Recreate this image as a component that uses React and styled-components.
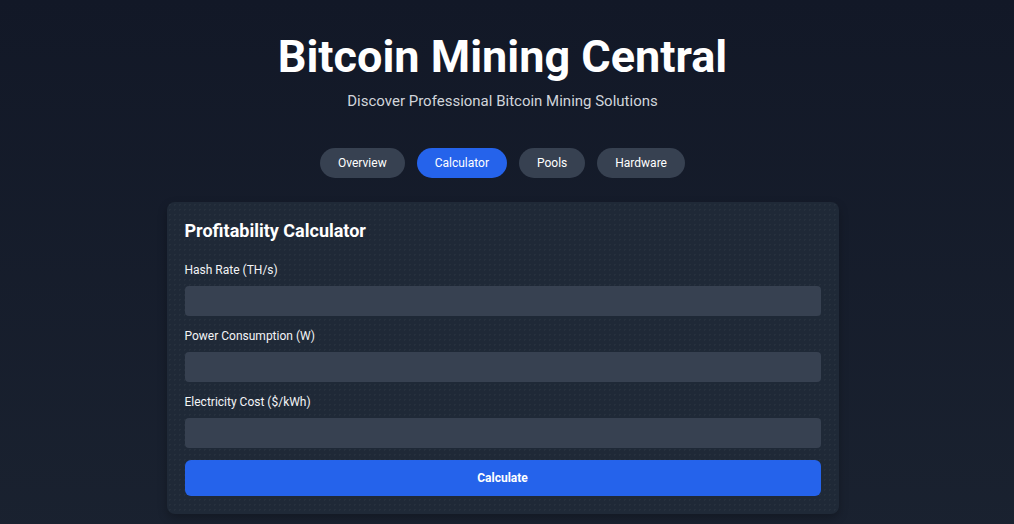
import styled, {createGlobalStyle} from "styled-components";

const GlobalStyle = createGlobalStyle`
    html, body {
        margin: 0;
        padding: 0;
    }
    body {
        font-family: Roboto, "Liberation Sans", sans-serif;
        color: #ffffff;
        background: #111827;
    }
    * {
        box-sizing: border-box;
    }
`

const tabs = ['Overview', 'Calculator', 'Pools', 'Hardware']
const fields = ['Hash Rate (TH/s)', 'Power Consumption (W)', 'Electricity Cost ($/kWh)']

const App = () => {
    return (
        <>
            <GlobalStyle/>
            <Page>
                <Header>
                    <Title>Bitcoin Mining Central</Title>
                    <Subtitle>Discover Professional Bitcoin Mining Solutions</Subtitle>
                </Header>
                <TabBar>
                    {tabs.map(tab => (
                        <Tab key={tab} $active={tab === 'Calculator'}>{tab}</Tab>
                    ))}
                </TabBar>
                <Card>
                    <CardTitle>Profitability Calculator</CardTitle>
                    {fields.map(field => (
                        <Field key={field}>
                            <Label>{field}</Label>
                            <Input type="number"/>
                        </Field>
                    ))}
                    <CalculateButton>Calculate</CalculateButton>
                </Card>
            </Page>
        </>
    );
}

const Page = styled.div`
    min-height: 100vh;
    display: flex;
    flex-direction: column;
    align-items: center;
    /* extra right padding leaves room like a scrollbar gutter */
    padding: 31px 25px 40px 16px;
    background: linear-gradient(180deg, #121827 0%, #1a2230 100%);
`

const Header = styled.header`
    display: flex;
    flex-direction: column;
    align-items: center;
`

const Title = styled.h1`
    margin: 0;
    font-size: 45px;
    font-weight: 700;
    line-height: 52px;
    color: #ffffff;
`

const Subtitle = styled.p`
    margin: 8px 0 0;
    font-size: 15px;
    line-height: 20px;
    color: #d1d5db;
`

const TabBar = styled.nav`
    display: flex;
    gap: 12px;
    margin-top: 37px;
`

const Tab = styled.button`
    appearance: none;
    border: none;
    height: 30px;
    padding: 0 18px;
    border-radius: 9999px;
    font-family: Roboto, "Liberation Sans", sans-serif;
    font-size: 12px;
    color: #ffffff;
    background-color: ${p => p.$active ? '#2563eb' : '#374151'};
    cursor: pointer;
`

const Card = styled.section`
    width: 672px;
    margin-top: 24px;
    padding: 17px 18px 18px;
    border-radius: 8px;
    background-color: #1f2937;
    background-image: radial-gradient(rgba(255, 255, 255, 0.03) 1px, transparent 1px);
    background-size: 5px 5px;
    box-shadow: 0 4px 10px rgba(0, 0, 0, 0.25);
    display: flex;
    flex-direction: column;
`

const CardTitle = styled.h2`
    margin: 0 0 19px;
    font-size: 18px;
    font-weight: 700;
    line-height: 24px;
    color: #ffffff;
`

const Field = styled.div`
    display: flex;
    flex-direction: column;
    gap: 8px;
    margin-bottom: 12px;
`

const Label = styled.label`
    font-size: 12px;
    line-height: 16px;
    color: #f3f4f6;
`

const Input = styled.input`
    height: 30px;
    border: none;
    border-radius: 4px;
    background: #374151;
    color: #ffffff;
    padding: 0 10px;
    font-family: Roboto, "Liberation Sans", sans-serif;
    outline: none;
`

const CalculateButton = styled.button`
    appearance: none;
    border: none;
    height: 36px;
    border-radius: 6px;
    background: #2563eb;
    color: #ffffff;
    font-family: Roboto, "Liberation Sans", sans-serif;
    font-size: 12px;
    font-weight: 700;
    cursor: pointer;
`

export default App;
